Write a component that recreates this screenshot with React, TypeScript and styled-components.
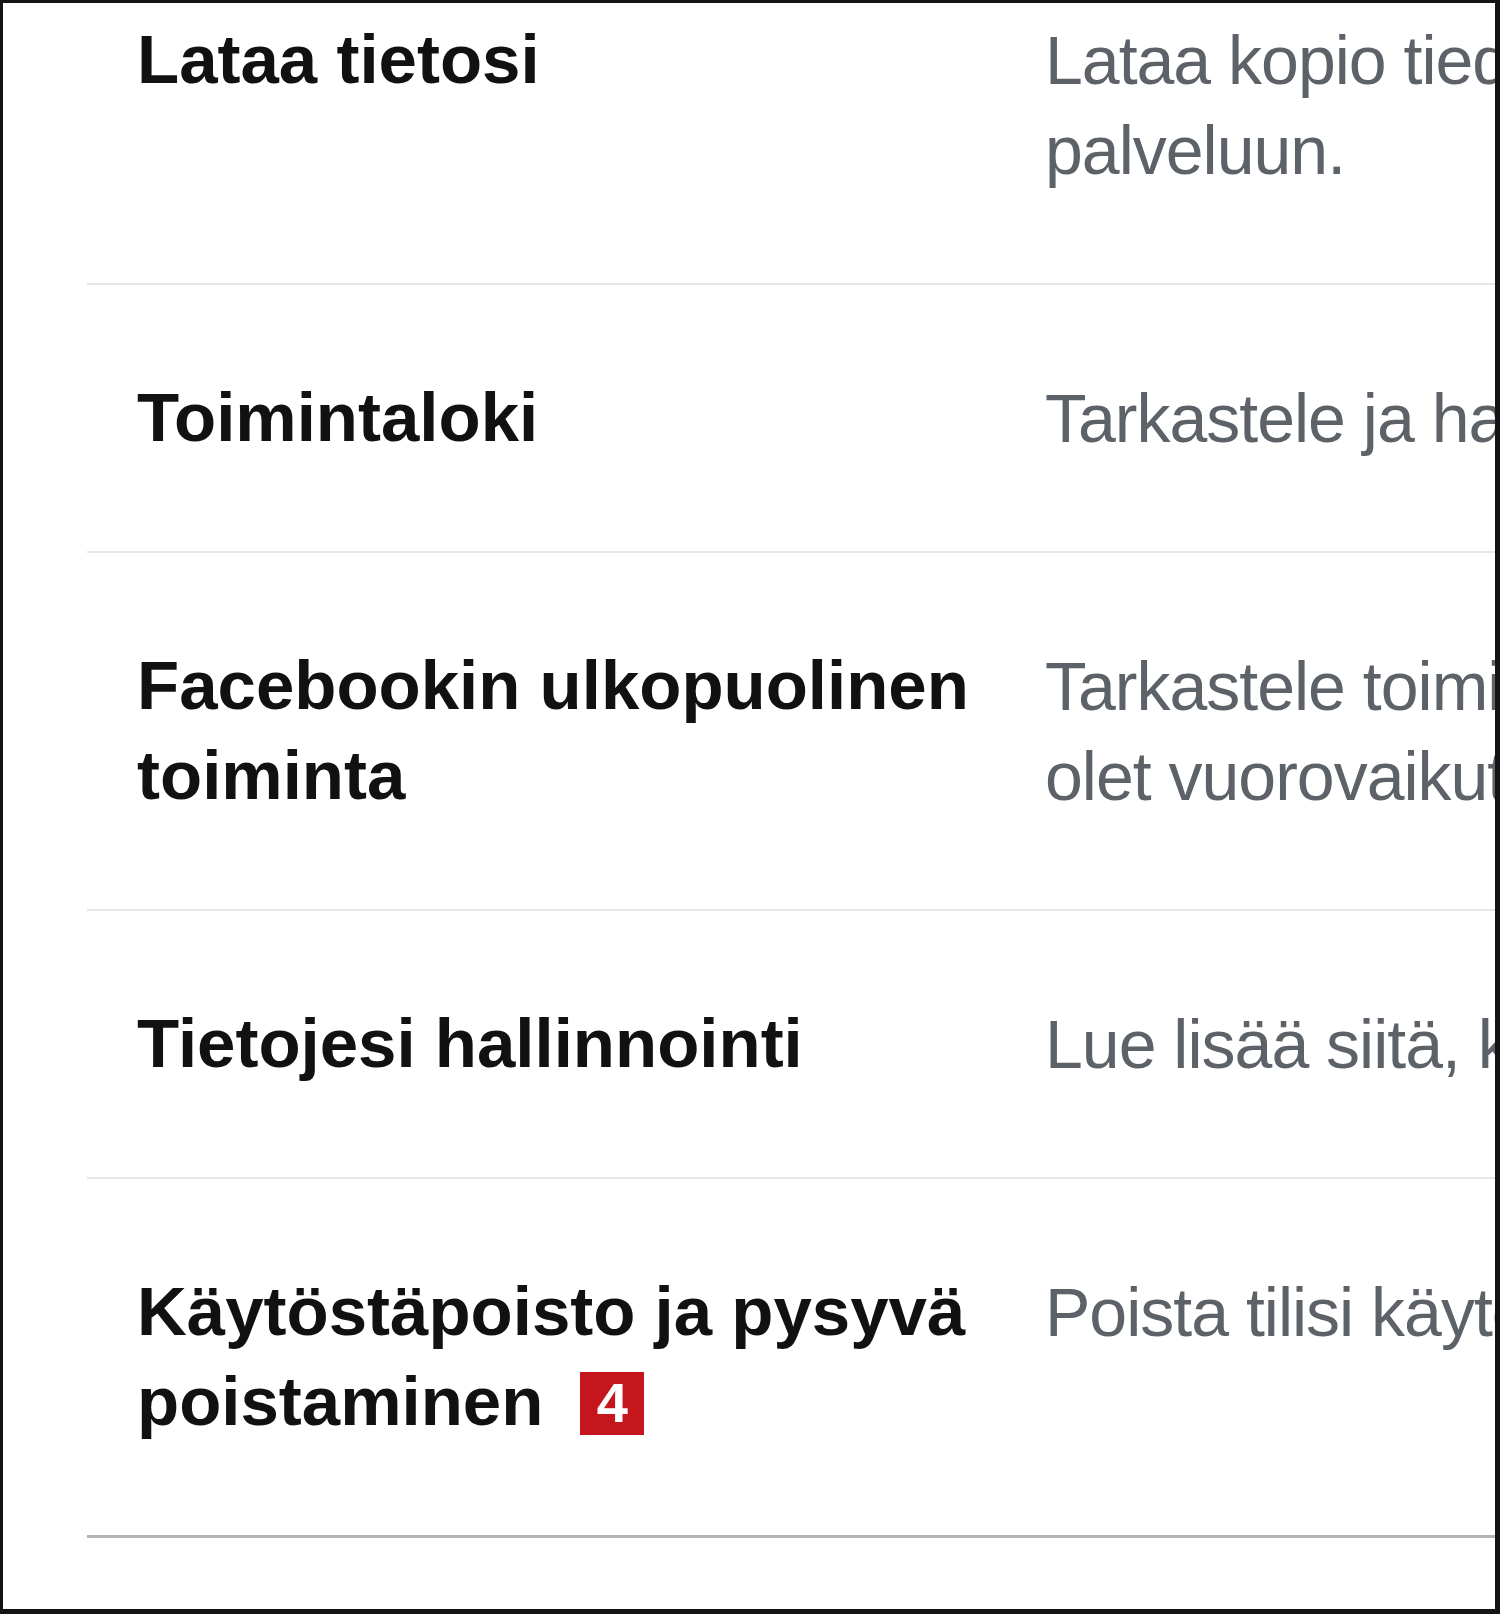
import React from "react";
import styled, { createGlobalStyle } from "styled-components";

const GlobalStyle = createGlobalStyle`
  html, body {
    margin: 0;
    padding: 0;
    background: #ffffff;
  }
`;

const Frame = styled.div`
  width: 1500px;
  height: 1614px;
  box-sizing: border-box;
  border-style: solid;
  border-color: #141414;
  border-width: 3px 5px 5px 3px;
  background: #ffffff;
  overflow: hidden;
`;

const List = styled.div`
  margin-left: 84px;
`;

const Row = styled.div<{ clipped?: boolean; last?: boolean }>`
  display: grid;
  grid-template-columns: 880px auto;
  column-gap: 28px;
  align-items: start;
  padding: ${({ clipped }) => (clipped ? "12px" : "88px")} 0 88px 50px;
  border-bottom: ${({ last }) => (last ? "3px solid #b2b4b7" : "2px solid #e6e7ea")};
`;

const Title = styled.div`
  font-family: "Liberation Sans", Arial, sans-serif;
  font-weight: 700;
  font-size: 69px;
  line-height: 90px;
  color: #111111;
`;

const Description = styled.div`
  font-family: "Liberation Sans", Arial, sans-serif;
  font-weight: 400;
  font-size: 68px;
  line-height: 90px;
  letter-spacing: -1px;
  color: #5d6269;
  white-space: nowrap;
`;

const Badge = styled.span`
  display: inline-flex;
  align-items: center;
  justify-content: center;
  width: 64px;
  height: 63px;
  margin-left: 37px;
  vertical-align: 3px;
  background: #c4161c;
  color: #ffffff;
  font-family: "Liberation Sans", Arial, sans-serif;
  font-weight: 700;
  font-size: 56px;
  line-height: 1;
`;

type Item = {
  title: string;
  lines: string[];
  badge?: number;
};

const items: Item[] = [
  {
    title: "Lataa tietosi",
    lines: ["Lataa kopio tiedoistasi, jotka olet jakanut Facebook-", "palveluun."],
  },
  {
    title: "Toimintaloki",
    lines: ["Tarkastele ja hallinnoi tietojasi ja joitain asetuksia."],
  },
  {
    title: "Facebookin ulkopuolinen toiminta",
    lines: [
      "Tarkastele toimintaa, jota yritykset ja organisaatiot jakavat kanssamme, kun",
      "olet vuorovaikutuksessa niiden kanssa.",
    ],
  },
  {
    title: "Tietojesi hallinnointi",
    lines: ["Lue lisää siitä, kuinka voit hallinnoida tietojasi."],
  },
  {
    title: "Käytöstäpoisto ja pysyvä poistaminen",
    lines: ["Poista tilisi käytöstä väliaikaisesti tai poista se pysyvästi."],
    badge: 4,
  },
];

export default function App() {
  return (
    <>
      <GlobalStyle />
      <Frame>
        <List>
          {items.map((item, i) => (
            <Row key={item.title} clipped={i === 0} last={i === items.length - 1}>
              <Title>
                {item.title}
                {item.badge !== undefined && <Badge>{item.badge}</Badge>}
              </Title>
              <Description>
                {item.lines.map((line, j) => (
                  <React.Fragment key={j}>
                    {j > 0 && <br />}
                    {line}
                  </React.Fragment>
                ))}
              </Description>
            </Row>
          ))}
        </List>
      </Frame>
    </>
  );
}
